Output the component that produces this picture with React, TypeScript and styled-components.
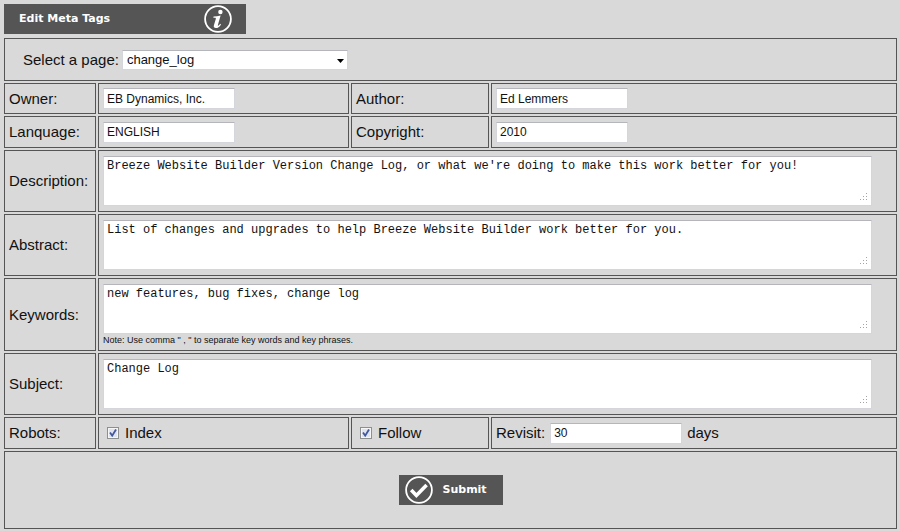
import React, { useState } from "react";
import styled, { createGlobalStyle, css } from "styled-components";

const GlobalStyle = createGlobalStyle`
  * {
    box-sizing: border-box;
  }
  body {
    margin: 0;
    background: #d9d9d9;
    color: #111;
    font-family: "Liberation Sans", Arial, sans-serif;
    font-size: 15px;
    line-height: 18px;
  }
`;

const Page = styled.main`
  padding: 4px 3px 2px 4px;
`;

const TitleBar = styled.header`
  display: flex;
  align-items: center;
  justify-content: space-between;
  width: 242px;
  height: 30px;
  margin-bottom: 4px;
  padding: 0 14px 0 15px;
  background: #555;
  color: #fff;
`;

const Title = styled.h1`
  margin: 0;
  font: bold 11px/18px "DejaVu Sans", sans-serif;
`;

const InfoButton = styled.button`
  display: flex;
  padding: 0;
  border: 0;
  background: none;
  color: inherit;
  cursor: pointer;
`;

const MetaForm = styled.form`
  display: grid;
  grid-template-columns: 92px 251px 138px 1fr;
  grid-template-rows: minmax(43px, auto) minmax(31px, auto) minmax(32px, auto);
  gap: 2px;
`;

const Cell = styled.div<{ $span?: number; $kind?: "picker" | "submit" }>`
  display: flex;
  align-items: center;
  grid-column: span ${(p) => p.$span ?? 1};
  min-height: 31px;
  padding: 0 4px;
  border: 1px solid #555;
  ${(p) =>
    p.$kind === "picker" &&
    css`
      gap: 3px;
      padding: 0 18px;
    `}
  ${(p) =>
    p.$kind === "submit" &&
    css`
      justify-content: center;
      min-height: 78px;
    `}
`;

const TextCell = styled(Cell)`
  flex-direction: column;
  align-items: flex-start;
  min-height: 62px;
  padding: 5px 4px 3px;
`;

const OptionCell = styled(Cell)`
  gap: 6px;
  min-height: 32px;
  padding: 0 8px;
`;

const RevisitCell = styled(Cell)`
  gap: 5px;
`;

const fieldSkin = css`
  margin: 0;
  border: 1px solid #d4d6dc;
  border-top-color: #b4b6bc;
  border-radius: 0;
  background: #fff;
  color: #111;
`;

const TextInput = styled.input`
  ${fieldSkin}
  width: 132px;
  height: 21px;
  padding: 0 3px;
  font: 12px/18px "Liberation Sans", Arial, sans-serif;
`;

const SelectWrap = styled.div`
  position: relative;
  display: flex;
`;

const Select = styled.select`
  ${fieldSkin}
  appearance: none;
  width: 226px;
  height: 20px;
  padding: 0 20px 0 4px;
  font: 13px/18px "Liberation Sans", Arial, sans-serif;
`;

const SelectArrow = styled.svg`
  position: absolute;
  right: 4px;
  top: 9px;
  pointer-events: none;
`;

const AreaWrap = styled.div`
  position: relative;
  display: flex;
  width: calc(100% - 20px);
`;

const TextArea = styled.textarea`
  ${fieldSkin}
  width: 100%;
  height: 50px;
  padding: 1px 3px;
  overflow: hidden;
  resize: none;
  font: 12px/16px "Liberation Mono", "Courier New", monospace;
`;

const Grip = styled.svg`
  position: absolute;
  right: 4px;
  bottom: 4px;
  pointer-events: none;
`;

const Note = styled.p`
  margin: 0;
  font-size: 9px;
  line-height: 13px;
`;

const TickBox = styled.span`
  position: relative;
  display: flex;
`;

const TickInput = styled.input`
  appearance: none;
  width: 12px;
  height: 12px;
  margin: 0;
  border: 1px solid #8e8f8f;
  background: #dfe4ee;
  box-shadow: inset 0 0 0 1px #f6f6f6;
  &:not(:checked) + svg {
    display: none;
  }
`;

const TickMark = styled.svg`
  position: absolute;
  inset: 0;
  pointer-events: none;
`;

const SubmitButton = styled.button`
  display: flex;
  align-items: center;
  gap: 10px;
  width: 104px;
  height: 30px;
  padding: 0 6px;
  border: 0;
  background: #555;
  color: #fff;
  font: bold 11px/18px "DejaVu Sans", sans-serif;
  cursor: pointer;
`;

function InfoIcon() {
  return (
    <svg width="28" height="28" viewBox="0 0 28 28" fill="none" aria-hidden="true">
      <circle cx="14" cy="14" r="12.9" stroke="#fff" strokeWidth="1.8" />
      <circle cx="16.4" cy="7" r="2.2" fill="#fff" />
      <path
        d="M9.600 11.600c2.200-.1 4.500-.4 7-1l-2.700 9.400c-.2.900.1 1.100.7.600.6-.5 1.100-1.100 1.600-1.800l.8.600c-1.500 2.500-3.200 3.700-5.100 3.700-1.800 0-2.500-1-2-2.800l1.900-6.300c.2-.8-.1-1.100-.9-1.200h-1.600z"
        fill="#fff"
      />
    </svg>
  );
}

function CheckIcon() {
  return (
    <svg width="28" height="28" viewBox="0 0 28 28" fill="none" aria-hidden="true">
      <circle cx="14" cy="14" r="12.9" stroke="#fff" strokeWidth="1.8" />
      <path d="M6.200 14l5.200 5.400L21.600 9" stroke="#fff" strokeWidth="3.600" />
    </svg>
  );
}

function AreaField({ id, initial }: { id: string; initial: string }) {
  return (
    <AreaWrap>
      <TextArea id={id} name={id} defaultValue={initial} spellCheck={false} />
      <Grip width="9" height="9" viewBox="0 0 9 9" fill="#a4a4a4" aria-hidden="true">
        <path d="M7 0h1v1h-1zM7 3h1v1h-1zM4 3h1v1h-1zM7 6h1v1h-1zM4 6h1v1h-1zM1 6h1v1h-1z" />
      </Grip>
    </AreaWrap>
  );
}

function Option({ id, label }: { id: string; label: string }) {
  const [checked, setChecked] = useState(true);
  return (
    <>
      <TickBox>
        <TickInput id={id} type="checkbox" checked={checked} onChange={(e) => setChecked(e.target.checked)} />
        <TickMark width="12" height="12" viewBox="0 0 12 12" fill="none" aria-hidden="true">
          <path d="M3 5.500l2.200 3.200L9 2.500" stroke="#42579d" strokeWidth="1.800" />
        </TickMark>
      </TickBox>
      <label htmlFor={id}>{label}</label>
    </>
  );
}

const shortFields = [
  { id: "owner", label: "Owner:", value: "EB Dynamics, Inc." },
  { id: "author", label: "Author:", value: "Ed Lemmers" },
  { id: "language", label: "Lanquage:", value: "ENGLISH" },
  { id: "copyright", label: "Copyright:", value: "2010" },
];

const longFields = [
  {
    id: "description",
    label: "Description:",
    value: "Breeze Website Builder Version Change Log, or what we're doing to make this work better for you!",
  },
  {
    id: "abstract",
    label: "Abstract:",
    value: "List of changes and upgrades to help Breeze Website Builder work better for you.",
  },
  {
    id: "keywords",
    label: "Keywords:",
    value: "new features, bug fixes, change log",
    note: 'Note: Use comma " , " to separate key words and key phrases.',
  },
  { id: "subject", label: "Subject:", value: "Change Log" },
];

export default function App() {
  return (
    <Page>
      <GlobalStyle />
      <TitleBar>
        <Title>Edit Meta Tags</Title>
        <InfoButton type="button" aria-label="Information">
          <InfoIcon />
        </InfoButton>
      </TitleBar>
      <MetaForm onSubmit={(e) => e.preventDefault()}>
        <Cell $span={4} $kind="picker">
          <label htmlFor="page">Select a page:</label>
          <SelectWrap>
            <Select id="page" name="page" defaultValue="change_log">
              <option value="change_log">change_log</option>
            </Select>
            <SelectArrow width="7" height="4" viewBox="0 0 7 4" aria-hidden="true">
              <path d="M0 0h7L3.500 4z" fill="#000" />
            </SelectArrow>
          </SelectWrap>
        </Cell>
        {shortFields.map((f) => (
          <React.Fragment key={f.id}>
            <Cell>
              <label htmlFor={f.id}>{f.label}</label>
            </Cell>
            <Cell>
              <TextInput id={f.id} name={f.id} defaultValue={f.value} />
            </Cell>
          </React.Fragment>
        ))}
        {longFields.map((f) => (
          <React.Fragment key={f.id}>
            <Cell>
              <label htmlFor={f.id}>{f.label}</label>
            </Cell>
            <TextCell $span={3}>
              <AreaField id={f.id} initial={f.value} />
              {f.note && <Note>{f.note}</Note>}
            </TextCell>
          </React.Fragment>
        ))}
        <Cell>Robots:</Cell>
        <OptionCell>
          <Option id="index" label="Index" />
        </OptionCell>
        <OptionCell>
          <Option id="follow" label="Follow" />
        </OptionCell>
        <RevisitCell>
          <label htmlFor="revisit">Revisit:</label>
          <TextInput id="revisit" name="revisit" defaultValue="30" />
          <span>days</span>
        </RevisitCell>
        <Cell $span={4} $kind="submit">
          <SubmitButton type="submit">
            <CheckIcon />
            Submit
          </SubmitButton>
        </Cell>
      </MetaForm>
    </Page>
  );
}
